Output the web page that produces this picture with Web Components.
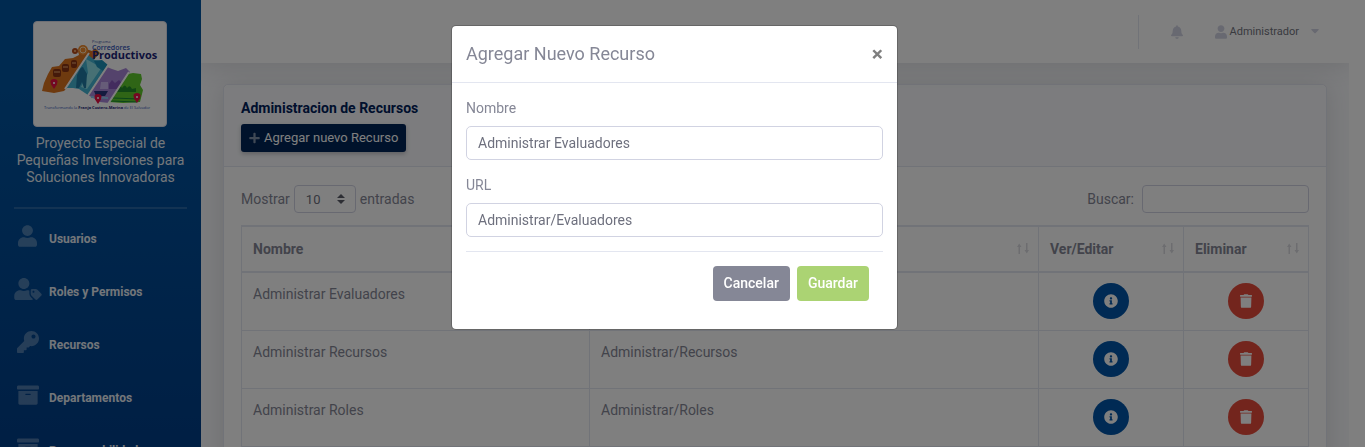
<!DOCTYPE html>
<html lang="es">
<head>
<meta charset="utf-8">
<title>Administracion de Recursos</title>
<style>
html, body { margin: 0; height: 100%; }
body { overflow: hidden; background: #fff; color: #858796; font: 14px/21px Roboto, "Open Sans", sans-serif; }
</style>
</head>
<body>
<admin-app></admin-app>
<script>
const define = (name, html, setup) => {
  const template = document.createElement('template');
  template.innerHTML = '<style>*{box-sizing:border-box}</style>' + html;
  customElements.define(name, class extends HTMLElement {
    connectedCallback() {
      if (this.shadowRoot) return;
      this.attachShadow({ mode: 'open' }).append(template.content.cloneNode(true));
      if (setup) setup(this, this.shadowRoot);
    }
  });
};

const ICONS = {
  user: ['0 0 448 512', 'M224 256c70.700 0 128-57.300 128-128S294.700 0 224 0 96 57.300 96 128s57.300 128 128 128zm89.600 32h-16.700c-22.200 10.200-46.900 16-72.900 16s-50.600-5.800-72.900-16h-16.700C60.200 288 0 348.200 0 422.400V464c0 26.500 21.500 48 48 48h352c26.500 0 48-21.500 48-48v-41.600c0-74.200-60.200-134.400-134.400-134.400z'],
  'user-tag': ['0 0 640 512', 'M630.600 364.900l-90.300-90.200c-12-12-28.300-18.700-45.300-18.700h-79.300c-17.700 0-32 14.300-32 32v79.200c0 17 6.700 33.200 18.700 45.200l90.300 90.200c12.500 12.500 32.800 12.500 45.300 0l92.500-92.500c12.600-12.500 12.600-32.700.1-45.200zm-182.800-21c-13.300 0-24-10.700-24-24s10.700-24 24-24 24 10.700 24 24c0 13.200-10.700 24-24 24zm-223.800-88c70.700 0 128-57.300 128-128C352 57.300 294.700 0 224 0S96 57.300 96 128c0 70.600 57.300 127.900 128 127.900zm127.800 111.200V294c-12.200-3.600-24.900-6.200-38.200-6.200h-16.700c-22.200 10.200-46.900 16-72.900 16s-50.600-5.800-72.900-16h-16.700c-74.200 0-134.400 60.200-134.400 134.400V464c0 26.500 21.500 48 48 48h352c15.500 0 29.100-7.500 37.900-18.900l-58-58c-18.100-18.100-28.100-42.200-28.100-68z'],
  key: ['0 0 512 512', 'M512 176c0 97.200-78.800 176-176 176-11.200 0-22.200-1.100-32.800-3.100l-24 27A24 24 0 0 1 261.200 384H224v40c0 13.300-10.700 24-24 24h-40v40c0 13.300-10.700 24-24 24H24c-13.300 0-24-10.700-24-24v-78.100c0-6.300 2.500-12.400 7-17l161.800-161.800C163 213.800 160 195.300 160 176 160 78.800 238.800 0 336 0c97.500 0 176 78.500 176 176zM336 128c0 26.500 21.500 48 48 48s48-21.500 48-48-21.500-48-48-48-48 21.500-48 48z'],
  archive: ['0 0 512 512', 'M32 448c0 17.700 14.300 32 32 32h384c17.700 0 32-14.300 32-32V160H32v288zm160-212c0-6.600 5.400-12 12-12h104c6.600 0 12 5.400 12 12v8c0 6.600-5.400 12-12 12H204c-6.600 0-12-5.400-12-12v-8zM480 32H32C14.300 32 0 46.300 0 64v48c0 8.800 7.200 16 16 16h480c8.800 0 16-7.200 16-16V64c0-17.700-14.300-32-32-32z'],
  bell: ['0 0 448 512', 'M224 512c35.300 0 64-28.700 64-64H160c0 35.300 28.600 64 64 64zm215.400-149.700c-19.300-20.800-55.500-52-55.500-154.300 0-77.700-54.500-139.900-127.900-155.200V32c0-17.700-14.300-32-32-32s-32 14.300-32 32v20.800C118.600 68.100 64.100 130.300 64.100 208c0 102.300-36.200 133.500-55.500 154.300-6 6.400-8.700 14.100-8.600 21.700.1 16.400 13 32 32.100 32h383.800c19.100 0 32-15.600 32.100-32 .1-7.600-2.600-15.300-8.600-21.700z'],
  plus: ['0 0 448 512', 'M416 208H272V64c0-17.700-14.300-32-32-32h-32c-17.700 0-32 14.300-32 32v144H32c-17.700 0-32 14.300-32 32v32c0 17.700 14.300 32 32 32h144v144c0 17.700 14.300 32 32 32h32c17.700 0 32-14.300 32-32V304h144c17.700 0 32-14.300 32-32v-32c0-17.700-14.300-32-32-32z'],
  info: ['0 0 512 512', 'M256 8C119 8 8 119.100 8 256c0 137 111 248 248 248s248-111 248-248C504 119.100 393 8 256 8zm0 110c23.200 0 42 18.800 42 42s-18.800 42-42 42-42-18.800-42-42 18.800-42 42-42zm56 254c0 6.600-5.400 12-12 12h-88c-6.600 0-12-5.400-12-12v-24c0-6.600 5.400-12 12-12h12v-64h-12c-6.600 0-12-5.400-12-12v-24c0-6.600 5.400-12 12-12h64c6.600 0 12 5.400 12 12v100h12c6.600 0 12 5.400 12 12v24z'],
  trash: ['0 0 448 512', 'M432 32H312l-9.400-18.700A24 24 0 0 0 281.100 0H166.800a23.700 23.700 0 0 0-21.400 13.300L136 32H16A16 16 0 0 0 0 48v32a16 16 0 0 0 16 16h416a16 16 0 0 0 16-16V48a16 16 0 0 0-16-16zM32 467a48 48 0 0 0 47.900 45h288.200a48 48 0 0 0 47.900-45L426 128H22z'],
  caret: ['0 0 320 192', 'M31 0h258c18 0 27 21 14 34L177 163c-9 10-25 10-34 0L17 34C4 21 13 0 31 0z'],
  sort: ['0 0 12 11', 'M1.500 11V4H0l2.200-3.500L4.500 4H3v7zM9 0h1.500v7H12l-2.200 3.500L7.500 7H9z']
};

define('ui-icon', `
<style>:host{display:inline-flex;flex:none}svg{display:block;fill:currentColor}</style>
<svg aria-hidden="true"><path/></svg>`, (host, root) => {
  const [box, path] = ICONS[host.getAttribute('name')];
  const [, , w, h] = box.split(' ').map(Number);
  const size = Number(host.getAttribute('size'));
  const svg = root.querySelector('svg');
  svg.setAttribute('viewBox', box);
  svg.setAttribute('height', size);
  svg.setAttribute('width', Math.round(size * w / h));
  root.querySelector('path').setAttribute('d', path);
});

define('program-logo', `
<style>
:host{display:block;flex:none;width:134px;height:106px;border:1px solid #dddfeb;border-radius:4px;background:#fff;overflow:hidden}
svg{display:block;width:100%;height:100%}
text{font-family:"Open Sans",sans-serif}
</style>
<svg viewBox="34 22 132 104" role="img" aria-label="Programa Corredores Productivos">
  <path fill="#dc741f" d="M44 83l4-9 4-7 7-1 6-7 8-1 6-3-1-4 8-2 6 2 3-3 5 5-36 38-10 2-12-2z"/>
  <circle cx="83" cy="50" r="5" fill="#f08a2c"/><circle cx="83" cy="50" r="3" fill="none" stroke="#ffe0b8"/>
  <circle cx="75" cy="51" r="3" fill="#b84c18"/><circle cx="75" cy="51" r="1" fill="#f3b57c"/>
  <g fill="#8a3415"><rect x="53" y="69" width="8" height="8" rx="2"/><rect x="62" y="64" width="7" height="8" rx="2"/><rect x="71" y="60" width="6" height="8" rx="2"/></g>
  <g stroke="#efac72"><path d="M54 72h6M63 67h5M72 63h4"/></g>
  <path fill="#45b4d2" d="M66 88l22-33 7 5 8 1 4 5-19 29-9-6-6-1z"/>
  <path fill="#8ee0e8" d="M86 59l9 5 7 3-15 22-6-2 7-14z"/>
  <path fill="#217ba4" d="M80 69q3-4 4 0l3 5-1 14h-2l-2-6-3 6h-3l1-13z"/>
  <path fill="#1d91b8" d="M94 61l8-1 6 5-5 6-6-4z"/>
  <path fill="#a886d8" d="M88 95l19-28 5 2 6 2 8-3 4 4-21 31-9-1z"/>
  <path fill="#cdb9f0" d="M101 82h7v7h-8z"/><path fill="#8759bd" d="M109 84l3-4 3 3 4-3 3 3-3 6H109z"/>
  <path fill="#28347c" d="M94 91h14l-3 5H96z"/><path stroke="#8ec9f1" stroke-width="2" d="M91 97l17 1"/>
  <path fill="#5fca2c" d="M109 102l19-28 5-1 8 1 1 5-2 6 3 5-3 12-17 1z"/>
  <path fill="#258e2a" d="M118 88q2-4 4 0 3-5 5 0 3-4 5 1l4-1v4h-20z"/><path stroke="#168a35" d="M113 98l26 1M111 101l26 1"/>
  <path stroke="#fff" stroke-width="2" d="M65 89l24-36M87 97l22-33M108 104l21-32"/>
  <g fill="#e90f43"><path d="M54 89q-7-10 0-10t0 10M98 104q-7-10 0-10t0 10M137 103q-7-10 0-10t0 10"/></g>
  <g fill="#e90f43"><circle cx="54" cy="83" r="3"/><circle cx="98" cy="98" r="3"/><circle cx="137" cy="97" r="3"/></g>
  <g fill="#fff"><circle cx="54" cy="83" r="1"/><circle cx="98" cy="98" r="1"/><circle cx="137" cy="97" r="1"/></g>
  <text x="92" y="43" font-size="4" fill="#3851a5">Programa</text>
  <text x="92" y="50" font-size="7" font-weight="600" fill="#3155b8">Corredores</text>
  <text x="92" y="59" font-size="11" font-weight="700" fill="#1d2478">Productivos</text>
  <text x="44" y="109" font-size="4" fill="#3155b8">Transformando la <tspan font-weight="700" fill="#1d2478">Franja Costero-Marina</tspan> de El Salvador</text>
</svg>`);

define('nav-item', `
<style>
:host{display:block}
a{display:flex;align-items:center;height:53px;color:#fff;font-size:12px;font-weight:700;line-height:18px;text-decoration:none}
.icon{display:flex;justify-content:center;width:27px;margin-right:8px;color:rgba(255,255,255,.3)}
.text{padding-top:6px;opacity:.9}
</style>
<a href="#"><span class="icon"></span><span class="text"><slot></slot></span></a>`, (host, root) => {
  const icon = document.createElement('ui-icon');
  icon.setAttribute('name', host.getAttribute('icon'));
  icon.setAttribute('size', 22);
  root.querySelector('.icon').append(icon);
});

define('app-sidebar', `
<style>
:host{display:flex;flex-direction:column;flex:none;width:201px;padding:21px 14px 0;background:linear-gradient(#0054a0 20%,#003e88)}
program-logo{margin-left:19px}
h1{margin:8px -14px 0;padding:0 14px;color:#fff;font-size:14px;font-weight:400;line-height:17px;text-align:center;opacity:.9}
hr{width:100%;margin:21px 0 0;border:0;border-top:2px solid rgba(255,255,255,.15)}
</style>
<program-logo></program-logo>
<h1>Proyecto Especial de Pequeñas Inversiones para Soluciones Innovadoras</h1>
<hr>
<nav>
  <nav-item icon="user">Usuarios</nav-item>
  <nav-item icon="user-tag">Roles y Permisos</nav-item>
  <nav-item icon="key">Recursos</nav-item>
  <nav-item icon="archive">Departamentos</nav-item>
  <nav-item icon="archive">Responsabilidades</nav-item>
</nav>`);

define('app-topbar', `
<style>
:host{display:flex;align-items:center;justify-content:flex-end;height:63px;padding-right:30px;background:#fff;box-shadow:0 2px 24px rgba(58,59,69,.15);position:relative}
.rule{width:1px;height:34px;margin-right:32px;background:#e3e6f0}
button,a{display:flex;align-items:center;padding:0;border:0;background:none;color:#d1d3e2}
a{margin-left:32px;font-size:11px;text-decoration:none}
span{margin:0 12px 0 3px;color:#73757f}
</style>
<div class="rule"></div>
<button aria-label="Notificaciones"><ui-icon name="bell" size="14"></ui-icon></button>
<a href="#"><ui-icon name="user" size="14"></ui-icon><span>Administrador</span><ui-icon name="caret" size="5"></ui-icon></a>`);

define('round-button', `
<style>
:host{display:inline-block;vertical-align:top}
button{display:flex;align-items:center;justify-content:center;width:36px;height:36px;padding:0;border:0;border-radius:50%;color:#fff;background:var(--fill)}
</style>
<button><slot></slot></button>`, (host, root) =>
  root.querySelector('button').setAttribute('aria-label', host.getAttribute('label')));

define('resource-table', `
<style>
:host{display:block}
table{width:100%;border-collapse:collapse;table-layout:fixed}
th,td{padding:11px;border:1px solid #e3e6f0;text-align:left;vertical-align:top}
th{border-top-width:2px;border-bottom-width:2px;padding:12px 9px 11px 11px}
th div{display:flex;justify-content:space-between}
ui-icon{color:#dadbe0;padding-top:4px}
td{height:58px;padding-bottom:0}
td.action{padding-top:10px;text-align:center}
td ui-icon{color:#fff;padding:0}
.name{width:348px}.edit{width:145px}.delete{width:125px}
</style>
<table>
  <colgroup><col class="name"><col><col class="edit"><col class="delete"></colgroup>
  <thead><tr></tr></thead>
  <tbody></tbody>
</table>`, (host, root) => {
  root.querySelector('thead tr').innerHTML = ['Nombre', 'URL', 'Ver/Editar', 'Eliminar']
    .map(t => `<th scope="col"><div>${t}<ui-icon name="sort" size="11"></ui-icon></div></th>`).join('');
  root.querySelector('tbody').innerHTML = ['Evaluadores', 'Recursos', 'Roles']
    .map(t => `<tr><td>Administrar ${t}</td><td>Administrar/${t}</td>
      <td class="action"><round-button label="Ver o editar" style="--fill:#0054a8"><ui-icon name="info" size="14"></ui-icon></round-button></td>
      <td class="action"><round-button label="Eliminar" style="--fill:#e74a3b"><ui-icon name="trash" size="14"></ui-icon></round-button></td></tr>`).join('');
});

define('resource-card', `
<style>
:host{display:block;border:1px solid #e3e6f0;border-radius:5px;background:#fff;box-shadow:0 2px 24px rgba(58,59,69,.15)}
header{padding:13px 17px 14px;border-bottom:1px solid #e3e6f0;background:#f8f9fc;border-radius:5px 5px 0 0}
h2{margin:0 0 5px;color:#00205a;font-size:14px;font-weight:700;line-height:21px}
header button{display:flex;align-items:center;gap:4px;height:28px;padding:0 8px;border:0;border-radius:3px;background:#002456;color:#fff;font:13px/20px Roboto,sans-serif;box-shadow:0 2px 4px rgba(58,59,69,.3)}
header ui-icon{opacity:.5}
.body{padding:18px 17px}
.tools{display:flex;justify-content:space-between;margin-bottom:12px}
label{display:flex;align-items:center;gap:4px}
label.search{gap:8px}
select,input{height:28px;border:1px solid #d1d3e2;border-radius:4px;color:#6e707e;font:13px Roboto,sans-serif}
select{width:62px;padding:0 11px;appearance:none;background:#fff url("data:image/svg+xml,%3Csvg xmlns='http://www.w3.org/2000/svg' viewBox='0 0 4 5'%3E%3Cpath fill='%235a5c69' d='M2 0L0 2h4zm0 5L0 3h4z'/%3E%3C/svg%3E") no-repeat right 10px center/8px 10px}
input{width:167px;padding:0 7px;background:#fff}
</style>
<header>
  <h2>Administracion de Recursos</h2>
  <button><ui-icon name="plus" size="12"></ui-icon>Agregar nuevo Recurso</button>
</header>
<div class="body">
  <div class="tools">
    <label>Mostrar <select><option>10</option><option>25</option></select> entradas</label>
    <label class="search">Buscar: <input type="search"></label>
  </div>
  <resource-table></resource-table>
</div>`);

define('form-field', `
<style>
:host{display:block;margin-bottom:14px}
label{display:block;padding-top:1px;margin-bottom:7px}
input{display:block;width:100%;height:34px;padding:0 11px;border:1px solid #d1d3e2;border-radius:5px;background:#fff;color:#6e707e;font:14px Roboto,sans-serif}
</style>
<label for="field"><slot></slot></label><input id="field" type="text">`, (host, root) => {
  root.querySelector('input').value = host.getAttribute('value');
});

define('modal-dialog', `
<style>
:host{position:fixed;inset:0;padding:25px 16px 0 0;background:rgba(0,0,0,.5)}
section{width:447px;margin:0 auto;border:1px solid rgba(0,0,0,.2);border-radius:5px;background:#fff;background-clip:padding-box}
header{display:flex;justify-content:space-between;align-items:center;height:57px;padding:0 14px;border-bottom:1px solid #e3e6f0}
h2{margin:0;font-size:18px;font-weight:400;line-height:28px}
button{border:0;border-radius:4px;color:#fff;font:500 14px/21px Roboto,sans-serif}
.close{padding:0;background:none;color:#7f7f7f;font:700 21px/21px Roboto,sans-serif}
.body{padding:14px}
footer{display:flex;justify-content:flex-end;gap:7px;padding:14px;border-top:1px solid #e3e6f0}
footer button{height:35px;padding:0 11px}
.cancel{background:#858796}.save{background:#abd373}
</style>
<section role="dialog" aria-labelledby="title">
  <header><h2 id="title">Agregar Nuevo Recurso</h2><button class="close" aria-label="Cerrar">×</button></header>
  <div class="body">
    <form-field value="Administrar Evaluadores">Nombre</form-field>
    <form-field value="Administrar/Evaluadores">URL</form-field>
    <footer><button class="cancel">Cancelar</button><button class="save">Guardar</button></footer>
  </div>
</section>`);

define('admin-app', `
<style>
:host{display:flex;height:100vh;padding-right:16px;overflow:hidden}
main{flex:1;min-width:0;overflow:hidden;background:#f8f9fc}
.content{padding:21px 22px 0}
</style>
<app-sidebar></app-sidebar>
<main><app-topbar></app-topbar><div class="content"><resource-card></resource-card></div></main>
<modal-dialog></modal-dialog>`);
</script>
</body>
</html>
